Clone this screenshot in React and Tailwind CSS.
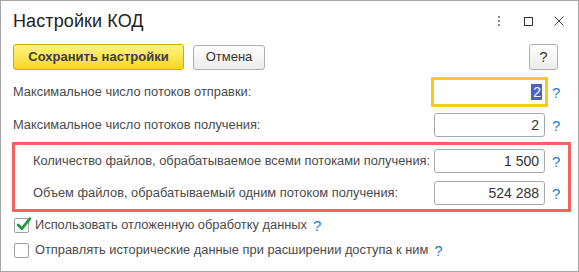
import { useState } from "react";

const font = { fontFamily: '"Liberation Sans", Arial, sans-serif' };

function Help() {
  return (
    <span className="shrink-0 w-[12px] ml-[7px] text-[15px] leading-none text-[#1c7fd4] text-left">?</span>
  );
}

function Field({ label, value, focused, indent }) {
  return (
    <div className={`flex items-center h-full ${indent ? "pl-[18px] pr-[4px]" : "pl-[12px] pr-[14px]"}`}>
      <span className="flex-1 min-w-0 text-[12.85px] text-[#4a4a4a] whitespace-nowrap">{label}</span>
      {focused ? (
        <div className="shrink-0 w-[117px] h-[30px] -mx-[3px] border-[3px] border-[#f7c81e] bg-white flex items-center justify-end pr-[3px] text-[14px] text-[#333]">
          <span className="w-[1px] h-[16px] bg-[#7a6a20]" />
          <span className="bg-[#4a62c8] text-white px-[1px] leading-[16px]">{value}</span>
        </div>
      ) : (
        <div className="shrink-0 w-[111px] h-[24px] border border-[#a8a8a8] rounded-[3px] bg-white flex items-center justify-end pr-[5px] text-[14px] text-[#333]">
          {value}
        </div>
      )}
      <Help />
    </div>
  );
}

function Check({ checked, label }) {
  return (
    <div className="flex items-center h-full pl-[13px]">
      <span className="w-[15px] h-[15px] border border-[#a0a0a0] rounded-[2px] bg-white relative">
        {checked && (
          <svg viewBox="0 0 16 16" className="absolute -top-[3px] left-[0px] w-[17px] h-[17px]">
            <path d="M3 8.5 L6.5 12 L14 2.5" fill="none" stroke="#1f9a3c" strokeWidth="2.6" strokeLinecap="round" strokeLinejoin="round" />
          </svg>
        )}
      </span>
      <span className="ml-[6px] text-[12.85px] text-[#4a4a4a] whitespace-nowrap">{label}</span>
      <span className="ml-[6px] text-[15px] leading-none text-[#1c7fd4]">?</span>
    </div>
  );
}

export default function App() {
  const [deferred] = useState(true);

  return (
    <div className="w-[579px] h-[272px] border border-[#a6a6a6] bg-white flex flex-col overflow-hidden" style={font}>
      {/* Title bar */}
      <div className="h-[40px] flex items-center pl-[12px] pr-[14px]">
        <h1 className="flex-1 text-[18px] text-[#222] tracking-[0.1px]">Настройки КОД</h1>
        <div className="flex flex-col gap-[2px] mr-[24px]">
          <span className="w-[2px] h-[2px] bg-[#8a8a8a]" />
          <span className="w-[2px] h-[2px] bg-[#8a8a8a]" />
          <span className="w-[2px] h-[2px] bg-[#8a8a8a]" />
        </div>
        <span className="w-[9px] h-[9px] border border-[#333] mr-[21px]" />
        <svg viewBox="0 0 10 10" className="w-[10px] h-[10px]">
          <path d="M0.5 0.5 L9.5 9.5 M9.5 0.5 L0.5 9.5" stroke="#444" strokeWidth="1" />
        </svg>
      </div>

      {/* Toolbar */}
      <div className="mt-[3px] h-[26px] flex items-center pl-[12px] pr-[20px]">
        <button className="h-[26px] w-[171px] rounded-[3px] border border-[#cfae00] bg-gradient-to-b from-[#fff37e] to-[#f6d800] text-[13px] font-bold text-[#3d3d3d]">
          Сохранить настройки
        </button>
        <button className="ml-[9px] h-[25px] w-[72px] rounded-[3px] border border-[#b0b0b0] bg-gradient-to-b from-white to-[#ececec] text-[13px] text-[#333]">
          Отмена
        </button>
        <div className="flex-1" />
        <button className="h-[26px] w-[29px] rounded-[3px] border border-[#b0b0b0] bg-gradient-to-b from-white to-[#ececec] text-[15px] text-[#333]">
          ?
        </button>
      </div>

      {/* Fields */}
      <div className="mt-[6px] h-[32px]">
        <Field label="Максимальное число потоков отправки:" value="2" focused />
      </div>
      <div className="h-[34px]">
        <Field label="Максимальное число потоков получения:" value="2" />
      </div>

      <div className="ml-[11px] mr-[7px] border-[3px] border-[#f46262] flex flex-col">
        <div className="h-[32px]">
          <Field indent label="Количество файлов, обрабатываемое всеми потоками получения:" value="1 500" />
        </div>
        <div className="h-[32px]">
          <Field indent label="Объем файлов, обрабатываемый одним потоком получения:" value="524 288" />
        </div>
      </div>

      {/* Checkboxes */}
      <div className="h-[26px]">
        <Check checked={deferred} label="Использовать отложенную обработку данных" />
      </div>
      <div className="h-[24px]">
        <Check label="Отправлять исторические данные при расширении доступа к ним" />
      </div>
    </div>
  );
}
